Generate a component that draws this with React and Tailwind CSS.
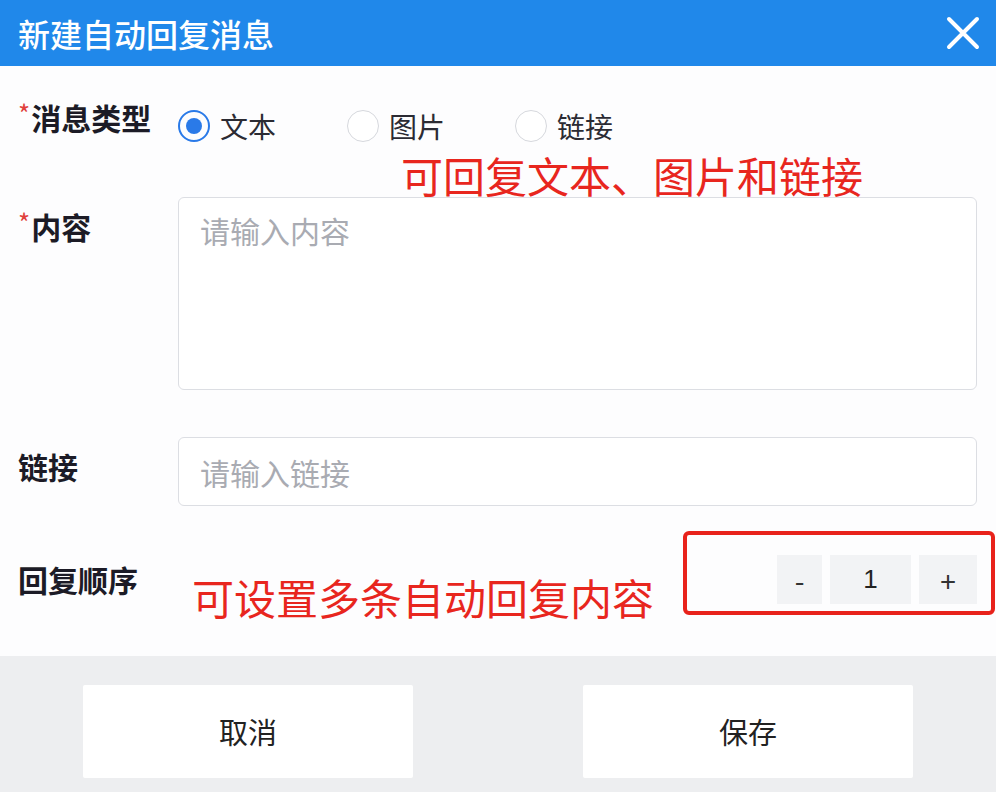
import { useState } from 'react'

function Radio({ checked, label, onClick }) {
  return (
    <label onClick={onClick} className="flex items-center cursor-pointer">
      <span
        className={
          checked
            ? 'w-[32px] h-[32px] rounded-full border-2 border-[#2a7ae8] flex items-center justify-center'
            : 'w-[32px] h-[32px] rounded-full border border-[#d6d8dd] bg-white'
        }
      >
        {checked && <span className="w-[16px] h-[16px] rounded-full bg-[#2a7ae8]" />}
      </span>
      <span className="ml-[10px] text-[28px] text-[#2b2b33] leading-[32px]">{label}</span>
    </label>
  )
}

function Label({ required, children }) {
  return (
    <div className="w-[160px] shrink-0 -mt-[3px] flex items-start text-[30px] font-bold text-[#1c1b26] leading-[32px]">
      {required && <span className="text-[#e0403a] text-[26px] leading-[26px] font-normal -mt-[1px] mr-[1px]">*</span>}
      {children}
    </div>
  )
}

export default function App() {
  const [type, setType] = useState('text')
  const [count, setCount] = useState(1)

  return (
    <div className="w-[996px] h-[792px] flex flex-col bg-white font-['Noto_Sans_CJK_SC',sans-serif]">
      <div className="h-[66px] shrink-0 bg-[#2088ea] flex items-center justify-between pl-[18px] pr-[16px]">
        <h1 className="text-white text-[32px] font-medium leading-none">新建自动回复消息</h1>
        <svg width="34" height="34" viewBox="0 0 34 34" fill="none" stroke="white" strokeWidth="4" strokeLinecap="round">
          <path d="M3 3 L31 31 M31 3 L3 31" />
        </svg>
      </div>

      <div className="flex-1 pl-[18px] pr-[19px] bg-[#fdfdfe]">
        <div className="mt-[38px] h-[48px] flex items-start">
          <Label required>消息类型</Label>
          <div className="mt-[6px] flex items-center">
            <div className="w-[169px]"><Radio checked={type === 'text'} label="文本" onClick={() => setType('text')} /></div>
            <div className="w-[168px]"><Radio checked={type === 'image'} label="图片" onClick={() => setType('image')} /></div>
            <Radio checked={type === 'link'} label="链接" onClick={() => setType('link')} />
          </div>
        </div>

        <div className="h-[45px] pl-[383px] text-[42px] text-[#e8261e] leading-[45px] whitespace-nowrap">可回复文本、图片和链接</div>

        <div className="flex items-start">
          <div className="pt-[16px]"><Label required>内容</Label></div>
          <textarea
            placeholder="请输入内容"
            className="w-[799px] h-[193px] resize-none rounded-[6px] border border-[#dcdee3] bg-white px-[21px] pt-[14px] text-[30px] leading-[36px] placeholder:text-[#a9abb2] outline-none"
          />
        </div>

        <div className="mt-[47px] flex items-center">
          <div className="-mt-[8px]"><Label>链接</Label></div>
          <input
            placeholder="请输入链接"
            className="w-[799px] h-[69px] rounded-[6px] border border-[#dcdee3] bg-white px-[21px] text-[30px] placeholder:text-[#a9abb2] outline-none"
          />
        </div>

        <div className="mt-[25px] flex items-start">
          <div className="pt-[35px]"><Label>回复顺序</Label></div>
          <div className="pt-[41px] pl-[14px] text-[42px] text-[#e8261e] leading-[50px] whitespace-nowrap">可设置多条自动回复内容</div>
          <div className="ml-auto -mr-[18px] w-[312px] h-[84px] shrink-0 rounded-[6px] border-4 border-[#e8221b] flex items-start justify-end pt-[20px] pr-[14px] gap-[8px]">
            <button onClick={() => setCount(Math.max(1, count - 1))} className="w-[45px] h-[49px] bg-[#f2f3f5] text-[28px] text-[#333] flex items-center justify-center">-</button>
            <div className="w-[81px] h-[49px] bg-[#f2f3f5] text-[26px] text-[#222] flex items-center justify-center font-['Liberation_Sans',sans-serif]">{count}</div>
            <button onClick={() => setCount(count + 1)} className="w-[58px] h-[49px] bg-[#f2f3f5] text-[28px] text-[#333] flex items-center justify-center">+</button>
          </div>
        </div>
      </div>

      <div className="h-[136px] shrink-0 bg-[#edeef0] flex items-start pt-[29px] pl-[83px] gap-[170px]">
        <button className="w-[330px] h-[93px] bg-white rounded-[2px] text-[29px] text-[#222]">取消</button>
        <button className="w-[330px] h-[93px] bg-white rounded-[2px] text-[29px] text-[#222]">保存</button>
      </div>
    </div>
  )
}
